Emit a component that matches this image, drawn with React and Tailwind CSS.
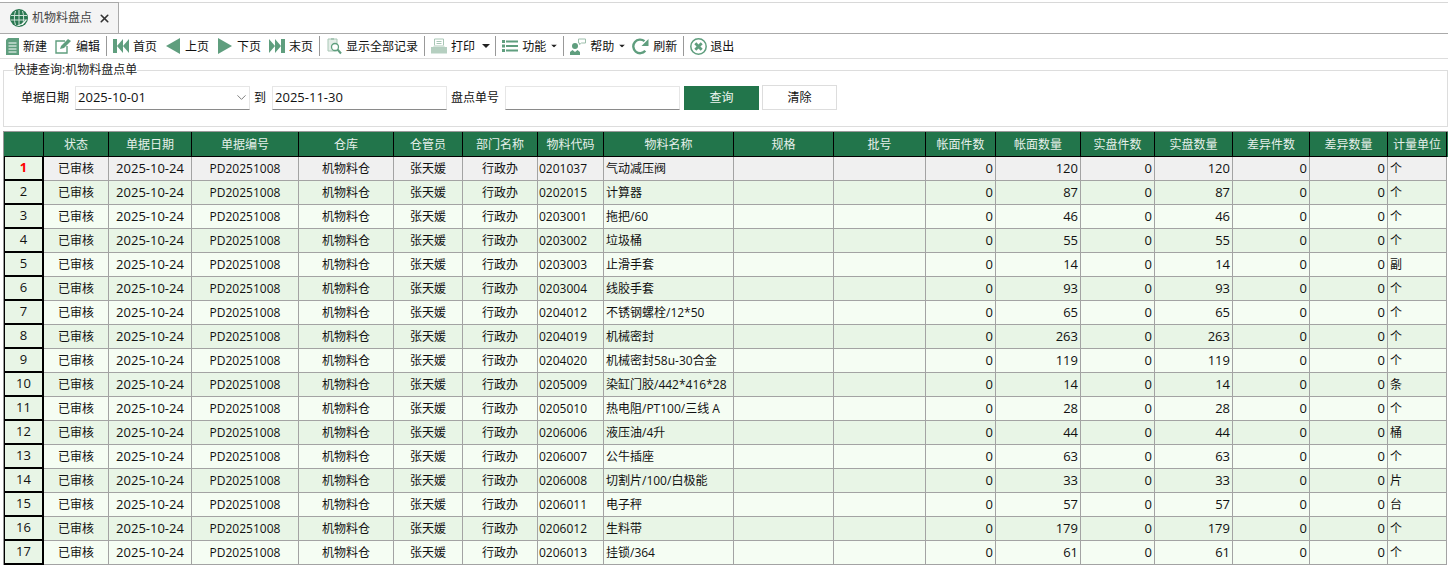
import React from 'react';
import { X, ChevronDown } from 'lucide-react';

const GREEN = '#5f9e7e';

const rows = [
  ['0201037', '气动减压阀', 120, '个'],
  ['0202015', '计算器', 87, '个'],
  ['0203001', '拖把/60', 46, '个'],
  ['0203002', '垃圾桶', 55, '个'],
  ['0203003', '止滑手套', 14, '副'],
  ['0203004', '线胶手套', 93, '个'],
  ['0204012', '不锈钢螺栓/12*50', 65, '个'],
  ['0204019', '机械密封', 263, '个'],
  ['0204020', '机械密封58u-30合金', 119, '个'],
  ['0205009', '染缸门胶/442*416*28', 14, '条'],
  ['0205010', '热电阻/PT100/三线 A', 28, '个'],
  ['0206006', '液压油/4升', 44, '桶'],
  ['0206007', '公牛插座', 63, '个'],
  ['0206008', '切割片/100/白极能', 33, '片'],
  ['0206011', '电子秤', 57, '台'],
  ['0206012', '生料带', 179, '个'],
  ['0206013', '挂锁/364', 61, '个'],
];

const headers = ['状态', '单据日期', '单据编号', '仓库', '仓管员', '部门名称', '物料代码', '物料名称', '规格', '批号', '帐面件数', '帐面数量', '实盘件数', '实盘数量', '差异件数', '差异数量', '计量单位'];

const gridCols = 'grid grid-cols-[40px_65px_83px_107px_95px_69px_75px_66px_130px_100px_92px_70px_85px_74px_78px_77px_78px_59px]';

const Sep = () => <div className="w-px h-[20px] bg-[#999]" />;

const Tool = ({ icon, label, className, arrow }) => (
  <div className={`flex items-center ${className}`}>
    {icon}
    <span className="pt-px">{label}</span>
    {arrow}
  </div>
);

const Caret = ({ className }) => (
  <svg width="8" height="4" viewBox="0 0 8 4" className={className}><path d="M0 0h8L4 4z" fill="#222" /></svg>
);

const IconNew = () => (
  <svg width="13" height="17" viewBox="0 0 13 17" className="mr-[4px]">
    <path d="M2 0h11v17H0V2z" fill={GREEN} />
    <path d="M2.500 5h8M2.500 8h8M2.500 11h8M2.500 14h8" stroke="#fff" strokeWidth="1" />
  </svg>
);
const IconEdit = () => (
  <svg width="17" height="16" viewBox="0 0 17 16" className="mr-[4px]">
    <path d="M10 3H1v12h11V8" fill="none" stroke={GREEN} strokeWidth="1.400" />
    <path d="M5 11l1-3 7-7 3 2-7 7z" fill={GREEN} />
  </svg>
);
const IconFirst = () => (
  <svg width="16" height="14" viewBox="0 0 16 14" className="mr-[4px]">
    <path d="M0 0h4v14H0zM10 0v14L4 7zM16 0v14l-6-7z" fill={GREEN} />
  </svg>
);
const IconPrev = () => (
  <svg width="14" height="16" viewBox="0 0 14 16" className="mr-[5px]"><path d="M14 0v16L0 8z" fill={GREEN} /></svg>
);
const IconNext = () => (
  <svg width="14" height="16" viewBox="0 0 14 16" className="mr-[5px]"><path d="M0 0v16l14-8z" fill={GREEN} /></svg>
);
const IconLast = () => (
  <svg width="16" height="14" viewBox="0 0 16 14" className="mr-[4px]">
    <path d="M16 0h-4v14h4zM6 0v14l6-7zM0 0v14l6-7z" fill={GREEN} />
  </svg>
);
const IconShowAll = () => (
  <svg width="15" height="18" viewBox="0 0 15 18" className="mr-[4px]">
    <path d="M1 2h9v12H1z" fill="#e4eee8" stroke="#a9c7b6" />
    <path d="M4 1h3v2H4z" fill="#a9c7b6" />
    <circle cx="8" cy="10" r="3.500" fill="#fff" stroke={GREEN} strokeWidth="1.300" />
    <path d="M10.500 12.500L14 16.500" stroke={GREEN} strokeWidth="2" />
  </svg>
);
const IconPrint = () => (
  <svg width="16" height="16" viewBox="0 0 16 16" className="mr-[4px]">
    <path d="M3.500 1h9v7h-9z" fill="#fff" stroke="#a9c7b6" />
    <path d="M5.500 3.500h5M5.500 5.500h5" stroke="#a9c7b6" />
    <path d="M0 9h16v6.500H0z" fill="#b5cfc0" />
    <path d="M2 9l1.500-2h9L14 9z" fill="#d5e4db" />
  </svg>
);
const IconList = () => (
  <svg width="16" height="12" viewBox="0 0 16 12" className="mr-[4px]">
    <path d="M0 0h3v3H0zM0 4.500h3v3H0zM0 9h3v3H0zM4 .5h12v2H4zM4 5h12v2H4zM4 9.500h12v2H4z" fill={GREEN} />
  </svg>
);
const IconHelp = () => (
  <svg width="16" height="17" viewBox="0 0 16 17" className="mr-[4px]">
    <circle cx="5" cy="8" r="3" fill={GREEN} />
    <path d="M0 17v-3l2.500-2 2.500 2 2.500-2 2.500 2v3z" fill={GREEN} />
    <path d="M8.500 1h7v4h-4l-2 1.500V5h-1z" fill="#fff" stroke="#9dbfac" />
  </svg>
);
const IconRefresh = () => (
  <svg width="17" height="17" viewBox="0 0 17 17" className="mr-[4px]">
    <path d="M13.300 12.800A6.800 6.800 0 1 1 12.500 3.200" fill="none" stroke={GREEN} strokeWidth="2.400" />
    <path d="M16.500 1v7h-7z" fill={GREEN} />
  </svg>
);
const IconExit = () => (
  <svg width="17" height="17" viewBox="0 0 17 17" className="mr-[3px]">
    <circle cx="8.500" cy="8.500" r="7.700" fill="none" stroke={GREEN} strokeWidth="1.500" />
    <path d="M5.300 5.300l6.400 6.400M11.700 5.300l-6.400 6.400" stroke={GREEN} strokeWidth="2.800" />
  </svg>
);
const IconGlobe = () => (
  <svg width="18" height="18" viewBox="0 0 18 18">
    <circle cx="9" cy="9" r="9" fill="#2a7750" />
    <path d="M1 6.500h16M1 11h16M9 1v16M5.500 2c-1.500 4-1.500 10 0 14M12.500 2c1.500 4 1.500 10 0 14" stroke="#cfe3d8" strokeWidth="1" fill="none" />
    <path d="M6 16.500c4 1 9-1 10.500-6l-2 1.500c-1.500 2.500-5 4-8.500 4.500z" fill="#fff" />
  </svg>
);

const Input = ({ className, children }) => (
  <div className={`h-[24px] flex items-center border border-[#e6e6e6] border-b-[#8a8a8a] bg-white pl-[2px] text-[13px] ${className}`}>
    {children}
  </div>
);

const cell = 'flex items-center h-[24px] border-r border-b border-[#a3a3a3] text-[12px] text-[#111]';

const Row = ({ n, row }) => {
  const [code, name, qty, unit] = row;
  const odd = n % 2 === 1;
  const bg = n === 1 ? 'bg-[#f0f0f0]' : odd ? 'bg-[#f5fdf3]' : 'bg-[#e8f5e6]';
  const center = `${cell} ${bg} justify-center`;
  const left = `${cell} ${bg} pl-[2px]`;
  const right = `${cell} ${bg} justify-end pr-[2px] text-[13px]`;
  return (
    <div className={gridCols}>
      <div className={`flex items-center justify-center h-[24px] border-2 border-l border-t-0 border-black bg-[#e8f5e6] text-[13px] ${n === 1 ? 'text-[#f00] font-bold' : 'text-[#111]'}`}>{n}</div>
      <div className={center}>已审核</div>
      <div className={`${center} text-[13px]`}>2025-10-24</div>
      <div className={`${center} text-[12.500px]`}>PD20251008</div>
      <div className={center}>机物料仓</div>
      <div className={center}>张天媛</div>
      <div className={center}>行政办</div>
      <div className={`${cell} ${bg} pl-[1px] text-[12.500px]`}>{code}</div>
      <div className={`${left} whitespace-pre overflow-hidden`}>{name}</div>
      <div className={left} />
      <div className={left} />
      <div className={right}>0</div>
      <div className={right}>{qty}</div>
      <div className={right}>0</div>
      <div className={right}>{qty}</div>
      <div className={right}>0</div>
      <div className={right}>0</div>
      <div className={left}>{unit}</div>
    </div>
  );
};

export default function App() {
  return (
    <div className="w-[1448px] h-[569px] overflow-hidden bg-white text-[12px] text-[#111] font-['Open_Sans','Noto_Sans_CJK_SC',sans-serif]">
      {/* tabs */}
      <div className="pt-[2px] h-[34px]">
        <div className="h-[32px] border-t border-[#d8d8d8] border-b border-b-[#aaa] flex">
          <div className="w-[119px] h-[31px] -mt-px border border-l-0 border-[#aaa] border-b-0 bg-[#f4f4f4] flex items-center pl-[10px]">
            <IconGlobe />
            <span className="ml-[4px] text-[#444]">机物料盘点</span>
            <X className="w-[13px] h-[13px] ml-[6px] text-[#333]" strokeWidth={3} />
          </div>
        </div>
      </div>

      {/* toolbar */}
      <div className="h-[25px] border-b border-[#ddd] flex items-center pl-[6px]">
        <Tool icon={<IconNew />} label="新建" />
        <Tool icon={<IconEdit />} label="编辑" className="ml-[8px]" />
        <div className="ml-[6px]"><Sep /></div>
        <Tool icon={<IconFirst />} label="首页" className="ml-[6px]" />
        <Tool icon={<IconPrev />} label="上页" className="ml-[9px]" />
        <Tool icon={<IconNext />} label="下页" className="ml-[9px]" />
        <Tool icon={<IconLast />} label="末页" className="ml-[8px]" />
        <div className="ml-[6px]"><Sep /></div>
        <Tool icon={<IconShowAll />} label="显示全部记录" className="ml-[7px]" />
        <div className="ml-[6px]"><Sep /></div>
        <Tool icon={<IconPrint />} label="打印" className="ml-[6px]" arrow={<Caret className="ml-[7px]" />} />
        <div className="ml-[5px]"><Sep /></div>
        <Tool icon={<IconList />} label="功能" className="ml-[6px]" arrow={<Caret className="ml-[4px] scale-75" />} />
        <div className="ml-[5px]"><Sep /></div>
        <Tool icon={<IconHelp />} label="帮助" className="ml-[6px]" arrow={<Caret className="ml-[4px] scale-75" />} />
        <Tool icon={<IconRefresh />} label="刷新" className="ml-[6px]" />
        <div className="ml-[6px]"><Sep /></div>
        <Tool icon={<IconExit />} label="退出" className="ml-[6px]" />
      </div>

      {/* quick search */}
      <fieldset className="mx-[3px] mt-[2px] h-[66px] border border-[#ddd] w-[1445px]">
        <legend className="ml-[10px] text-[#222]">快捷查询:机物料盘点单</legend>
        <div className="flex items-center mt-[6px] pl-[17px]">
          <span>单据日期</span>
          <Input className="w-[175px] ml-[6px] justify-between">
            <span>2025-10-01</span>
            <ChevronDown className="w-[15px] h-[15px] text-[#777]" strokeWidth={1.500} />
          </Input>
          <span className="ml-[4px]">到</span>
          <Input className="w-[175px] ml-[6px]">2025-11-30</Input>
          <span className="ml-[4px]">盘点单号</span>
          <Input className="w-[175px] ml-[6px]" />
          <button className="w-[75px] h-[24px] ml-[4px] bg-[#22754b] text-[#eef5f0]">查询</button>
          <button className="w-[75px] h-[25px] ml-[3px] border border-[#ddd] bg-white">清除</button>
        </div>
      </fieldset>

      {/* grid */}
      <div className="ml-[3px] mt-[4px] w-[1445px] border-t border-l border-[#999]">
        <div className={`${gridCols} bg-[#22754b] text-[#e6f0ea]`}>
          <div className="h-[25px] border-r border-b border-black" />
          {headers.map((h) => (
            <div key={h} className="h-[25px] pt-px flex items-center justify-center border-r border-b border-black">{h}</div>
          ))}
        </div>
        {rows.map((row, i) => <Row key={row[0]} n={i + 1} row={row} />)}
      </div>
    </div>
  );
}
